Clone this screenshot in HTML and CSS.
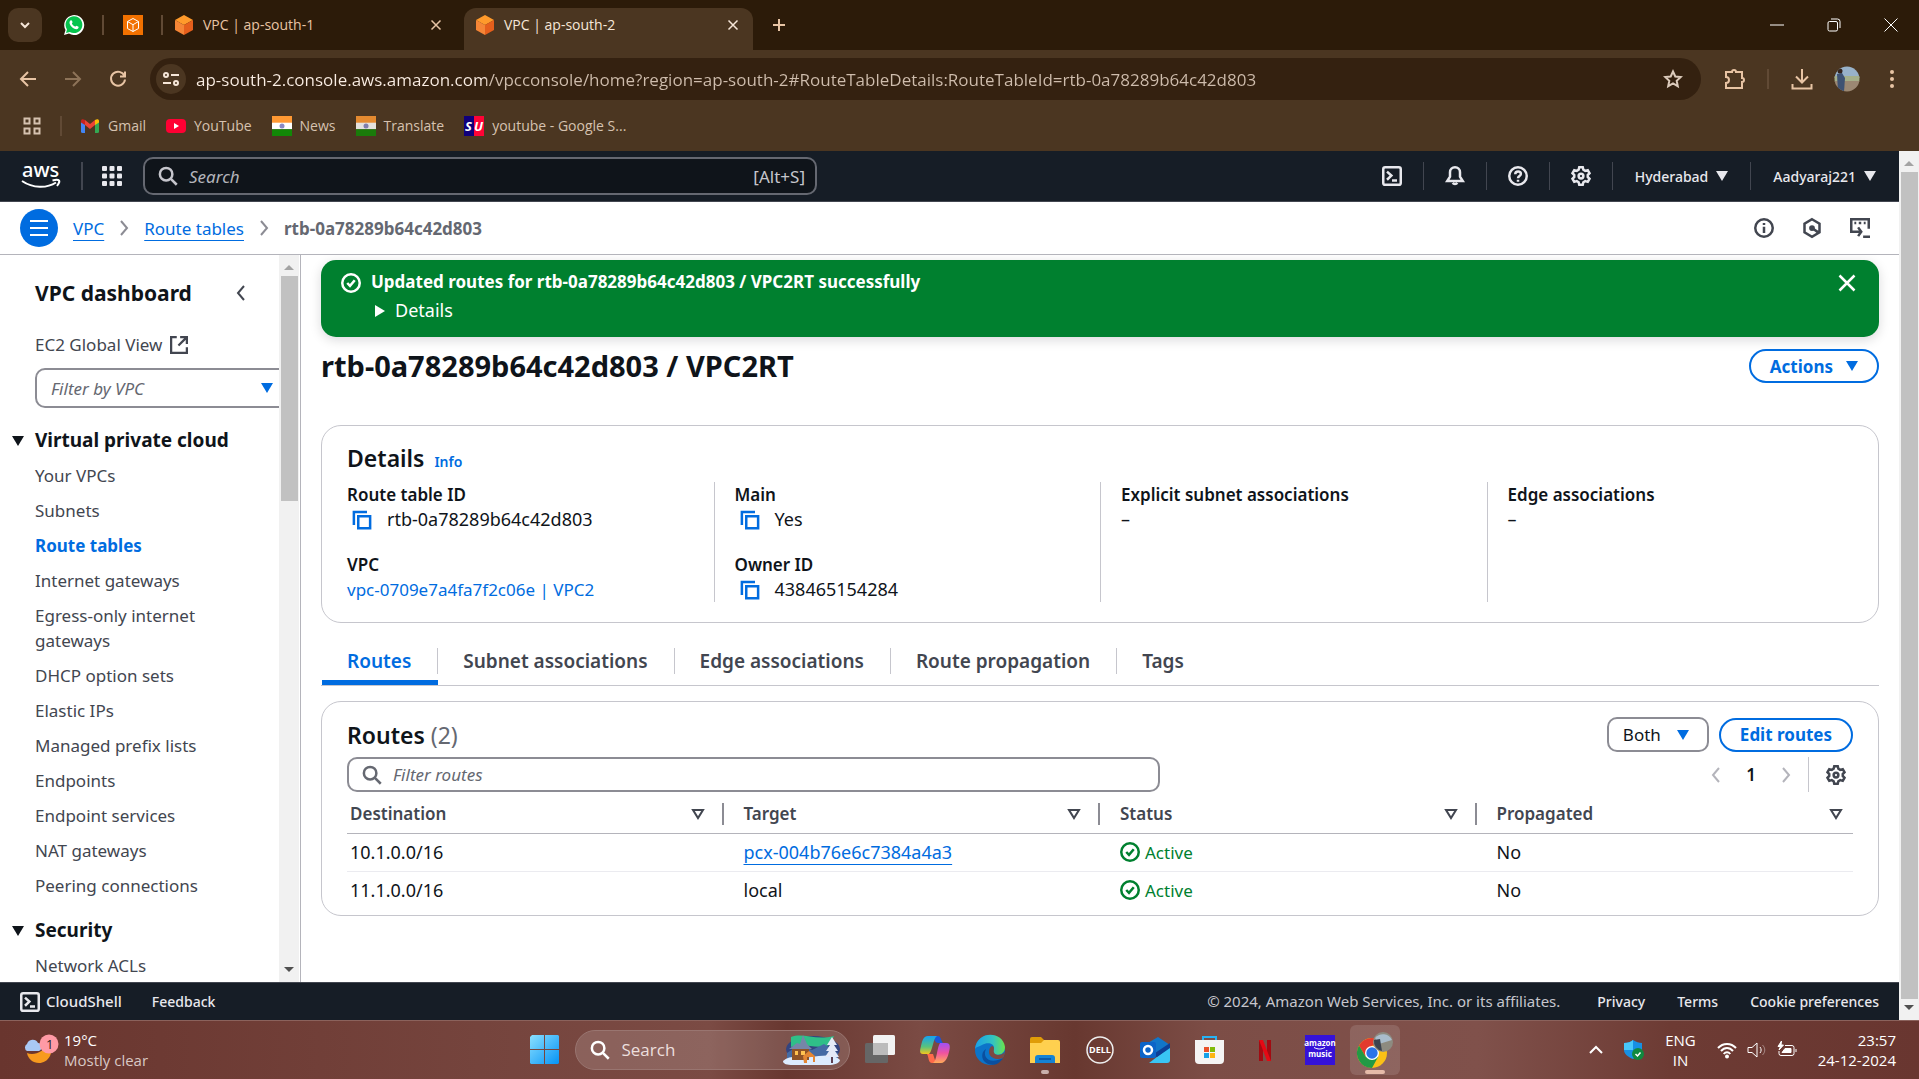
FILE: index.html
```html
<!DOCTYPE html>
<html lang="en">
<head>
<meta charset="utf-8">
<title>VPC | ap-south-2</title>
<meta name="viewport" content="width=device-width, initial-scale=1">
<link rel="stylesheet" href="styles.css">
</head>
<body>
<svg class="sprite" aria-hidden="true">
  <symbol id="i-search" viewBox="0 0 16 16"><circle cx="6.500" cy="6.500" r="5"/><path d="M10.300 10.300 15 15"/></symbol>
  <symbol id="i-gear" viewBox="0 0 16 16"><path d="M6.600 1h2.800l.5 2 1.500.9 2-.6 1.400 2.500-1.400 1.400v1.600l1.400 1.400-1.400 2.500-2-.6-1.500.9-.5 2H6.600l-.5-2-1.500-.9-2 .6-1.400-2.500 1.400-1.400V7.200L1.200 5.800l1.400-2.500 2 .6L6.100 3z"/><circle cx="8" cy="8" r="1.900"/></symbol>
  <symbol id="i-down" viewBox="0 0 12 10"><path d="M0 0h12L6 10z"/></symbol>
  <symbol id="i-sort" viewBox="0 0 14 12"><path d="M2 2h10L7 10z"/></symbol>
  <symbol id="i-right" viewBox="0 0 16 16"><path d="m5 1 6 7-6 7"/></symbol>
  <symbol id="i-left" viewBox="0 0 16 16"><path d="m11 1-6 7 6 7"/></symbol>
  <symbol id="i-close" viewBox="0 0 16 16"><path d="m2 2 12 12M14 2 2 14"/></symbol>
  <symbol id="i-ok" viewBox="0 0 16 16"><circle cx="8" cy="8" r="7"/><path d="m5 8 2.200 2.300L11 5.800"/></symbol>
  <symbol id="i-copy" viewBox="0 0 16 16"><path d="M1.500 12V1.500H12M5 5h9.500v9.500H5z"/></symbol>
  <symbol id="i-shell" viewBox="0 0 16 16"><rect x="1" y="1" width="14" height="14" rx="1.500"/><path d="m4 4.500 3.500 3.200L4 11M8 11.500h4"/></symbol>
  <symbol id="i-cube" viewBox="0 0 18 20"><path fill="#ff9a2b" d="M9 0l9 5-9 5-9-5z"/><path fill="#f58536" d="M0 5l9 5v10l-9-5z"/><path fill="#e65f1c" d="M18 5l-9 5v10l9-5z"/></symbol>
  <symbol id="i-flag" viewBox="0 0 20 20"><path fill="#ff9933" d="M0 0h20v7H0z"/><path fill="#fff" d="M0 6.700h20v6.600H0z"/><path fill="#128807" d="M0 13.300h20V20H0z"/><circle cx="10" cy="10" r="2.500" fill="#8a8ac4"/></symbol>
</svg>

<header class="browser">
  <div class="tabstrip">
    <button class="tab-search" aria-label="Search tabs"><svg class="line s12" viewBox="0 0 12 12"><path d="m2 4 4 4 4-4"/></svg></button>
    <button class="pinned" aria-label="WhatsApp"><svg class="s20" viewBox="0 0 20 20"><path fill="#fff" d="M0 20l1.500-5A10 10 0 1 1 5 18.600z"/><path fill="#06c44d" d="M2 18l1-3.600A8.400 8.400 0 1 1 5.800 17z"/><path fill="#fff" d="M6.500 5.500c1-.8 1.500 0 2 1.500.2.800-.8 1-.5 1.700.8 1.500 1.700 2.200 3 2.800.7.200 1-.9 1.500-.8l2 1c.6.700-.6 2.600-2 2.600C9 14.300 5.300 10 5.500 7.500c0-.8.500-1.600 1-2z"/></svg></button>
    <span class="tick"></span>
    <button class="pinned" aria-label="AWS console"><svg class="s20" viewBox="0 0 20 20"><path fill="#f27100" d="M0 0h20v20H0z"/><path fill="none" stroke="#fff" d="M10 3.500l5.500 3v7l-5.500 3-5.500-3v-7zM4.500 6.500 10 9.700l5.500-3.200M10 9.700v6.800"/></svg></button>
    <span class="tick"></span>
    <div class="tab"><svg class="cube"><use href="#i-cube"/></svg><span class="tab-title">VPC | ap-south-1</span><button aria-label="Close tab"><svg class="line s12"><use href="#i-close"/></svg></button></div>
    <div class="tab tab-active"><svg class="cube"><use href="#i-cube"/></svg><span class="tab-title">VPC | ap-south-2</span><button aria-label="Close tab"><svg class="line s12"><use href="#i-close"/></svg></button></div>
    <button class="new-tab" aria-label="New tab"><svg class="line s16" viewBox="0 0 16 16"><path d="M8 2v12M2 8h12"/></svg></button>
    <div class="window-controls">
      <button aria-label="Minimise"><svg class="line s14" viewBox="0 0 14 14"><path d="M0 7h14"/></svg></button>
      <button aria-label="Restore"><svg class="line s14" viewBox="0 0 14 14"><rect x="1" y="3.500" width="9.500" height="9.500" rx="1.500"/><path d="M4 1h6.500a2.500 2.500 0 0 1 2.500 2.500V10"/></svg></button>
      <button aria-label="Close"><svg class="line s14" viewBox="0 0 14 14"><path d="m.5.5 13 13m0-13-13 13"/></svg></button>
    </div>
  </div>
  <div class="toolbar">
    <button class="tool" aria-label="Back"><svg class="line s18" viewBox="0 0 18 18"><path d="M17 9H2m7-7L2 9l7 7"/></svg></button>
    <button class="tool dim" aria-label="Forward"><svg class="line s18" viewBox="0 0 18 18"><path d="M1 9h15M9 2l7 7-7 7"/></svg></button>
    <button class="tool" aria-label="Reload"><svg class="line s18" viewBox="0 0 18 18"><path d="M15.500 6A7 7 0 1 0 16 9.500M16 1.500V6.500h-5"/></svg></button>
    <div class="omnibox">
      <button class="site-info" aria-label="Site information"><svg class="line s18" viewBox="0 0 18 18"><circle cx="4" cy="5" r="2"/><path d="M9 5h8M1 13h8"/><circle cx="14" cy="13" r="2"/></svg></button>
      <input class="url" aria-label="Address" value="ap-south-2.console.aws.amazon.com/vpcconsole/home?region=ap-south-2#RouteTableDetails:RouteTableId=rtb-0a78289b64c42d803">
      <button class="star" aria-label="Bookmark this tab"><svg class="line s20" viewBox="0 0 20 20"><path d="m10 2.500 2.300 5 5.400.6-4 3.700 1.100 5.400L10 14.500l-4.800 2.700 1.100-5.400-4-3.700 5.400-.6z"/></svg></button>
    </div>
    <button class="tool" aria-label="Extensions"><svg class="line s22" viewBox="0 0 22 22"><path d="M2 4h6a2 2 0 0 1 4 0h6v6a2 2 0 0 1 0 4v6H2v-5a3 3 0 0 0 0-6z"/></svg></button>
    <span class="tick"></span>
    <button class="tool" aria-label="Downloads"><svg class="line s22" viewBox="0 0 22 22"><path d="M11 1v13M5 8.500l6 6 6-6M1.500 16v4.500h19V16"/></svg></button>
    <button class="tool" aria-label="Profile"><svg class="s26" viewBox="0 0 26 26"><clipPath id="av"><circle cx="13" cy="13" r="12.500"/></clipPath><g clip-path="url(#av)"><path fill="#98b2c9" d="M0 0h26v12H0z"/><path fill="#a5b08a" d="M0 10h26v6H0z"/><path fill="#9b8873" d="M0 15h26v11H0z"/><path fill="#3e5273" d="M3 8l5-1 3 5-1 14H4z"/><circle cx="6" cy="5" r="2.500" fill="#33241e"/></g></svg></button>
    <button class="tool" aria-label="Menu"><svg class="s20 fill" viewBox="0 0 20 20"><circle cx="10" cy="3" r="2"/><circle cx="10" cy="10" r="2"/><circle cx="10" cy="17" r="2"/></svg></button>
  </div>
  <nav class="bookmarks" aria-label="Bookmarks">
    <button aria-label="All apps"><svg class="line s18" viewBox="0 0 18 18"><path d="M1.500 1.500h5v5h-5zM11.500 1.500h5v5h-5zM1.500 11.500h5v5h-5zM11.500 11.500h5v5h-5z"/></svg></button>
    <span class="tick"></span>
    <a href="#"><svg class="s20" viewBox="0 0 20 20"><path fill="#4285f4" d="M1 5l4 3v9H2.500A1.500 1.500 0 0 1 1 15.500z"/><path fill="#34a853" d="M19 5l-4 3v9h2.500a1.500 1.500 0 0 0 1.500-1.500z"/><path fill="#ea4335" d="M5 4l5 4 5-4v5l-5 4-5-4z"/><path fill="#c5221f" d="M1 5c0-2 2-2.500 4-1v5L1 6.500z"/><path fill="#fbbc04" d="M19 5c0-2-2-2.500-4-1v5l4-2.500z"/></svg>Gmail</a>
    <a href="#"><svg class="s20" viewBox="0 0 20 20"><rect y="3" width="20" height="14" rx="4" fill="#ff0033"/><path fill="#fff" d="m8 7 5 3-5 3z"/></svg>YouTube</a>
    <a href="#"><svg class="s20"><use href="#i-flag"/></svg>News</a>
    <a href="#"><svg class="s20 pale"><use href="#i-flag"/></svg>Translate</a>
    <a href="#"><svg class="s20" viewBox="0 0 20 20"><path fill="#10007c" d="M0 0h10v20H0z"/><path fill="#ff0336" d="M10 0h10v20H10z"/><text class="su" x="1" y="15">S</text><text class="su" x="10" y="15">U</text></svg>youtube - Google S...</a>
  </nav>
</header>

<div class="viewport">
  <div class="console">
    <header class="aws-nav">
      <a class="aws-logo" href="#" aria-label="AWS home"><svg viewBox="0 0 40 27"><text x="1" y="14">aws</text><path class="smile" d="M1 18c11 7.500 25 7.500 34 1.500M31.500 17.500c4-1 6-.5 6.500 0s0 3-2 5.500"/></svg></a>
      <span class="bar bar-tall"></span>
      <button class="apps" aria-label="Services"><svg class="s20 fill" viewBox="0 0 20 20"><rect width="5" height="5" rx="1"/><rect x="7.500" width="5" height="5" rx="1"/><rect x="15" width="5" height="5" rx="1"/><rect y="7.500" width="5" height="5" rx="1"/><rect x="7.500" y="7.500" width="5" height="5" rx="1"/><rect x="15" y="7.500" width="5" height="5" rx="1"/><rect y="15" width="5" height="5" rx="1"/><rect x="7.500" y="15" width="5" height="5" rx="1"/><rect x="15" y="15" width="5" height="5" rx="1"/></svg></button>
      <label class="aws-search"><svg class="line s20"><use href="#i-search"/></svg><input type="search" placeholder="Search" aria-label="Search"><span>[Alt+S]</span></label>
      <div class="aws-tools">
        <button aria-label="CloudShell"><svg class="line s20"><use href="#i-shell"/></svg></button><span class="bar"></span>
        <button aria-label="Notifications"><svg class="line s20" viewBox="0 0 16 16"><path d="M8 1a4 4 0 0 0-4 4v3.500L1.800 12h12.400L12 8.500V5a4 4 0 0 0-4-4zM6.200 13.500a2 1.700 0 0 0 3.600 0"/></svg></button><span class="bar"></span>
        <button aria-label="Help"><svg class="line s20" viewBox="0 0 16 16"><circle cx="8" cy="8" r="7"/><path d="M5.800 6.500C5.800 3.500 10.300 3.700 10.300 6.300 10.300 8 8 8 8 9.800M8 11v1.500"/></svg></button><span class="bar"></span>
        <button aria-label="Settings"><svg class="line s20"><use href="#i-gear"/></svg></button><span class="bar"></span>
        <button class="aws-menu">Hyderabad<svg class="arrow"><use href="#i-down"/></svg></button><span class="bar"></span>
        <button class="aws-menu">Aadyaraj221<svg class="arrow"><use href="#i-down"/></svg></button>
      </div>
    </header>

    <div class="crumb-bar">
      <button class="burger" aria-label="Open navigation"><svg class="line s18" viewBox="0 0 18 18"><path d="M0 2h18M0 9h18M0 16h18"/></svg></button>
      <nav class="crumbs" aria-label="Breadcrumbs">
        <a href="#">VPC</a><svg class="line s16"><use href="#i-right"/></svg><a href="#">Route tables</a><svg class="line s16"><use href="#i-right"/></svg><span>rtb-0a78289b64c42d803</span>
      </nav>
      <div class="crumb-tools">
        <button aria-label="Info"><svg class="line s20" viewBox="0 0 16 16"><circle cx="8" cy="8" r="7"/><path d="M8 7v5M8 4v1.500"/></svg></button>
        <button aria-label="Diagnostics"><svg class="line s20" viewBox="0 0 16 16"><path d="m8 1 6 3.500v7L8 15l-6-3.500v-7zM8 8l5 3.500"/><circle class="fill" cx="8" cy="8" r="1.300"/></svg></button>
        <button aria-label="Console to code"><svg class="line s20" viewBox="0 0 16 16"><path d="M4 11H1V1h14v7.500M3.500 4H5m2 0h2m2 0h1.500M4 11h5M6.500 7.500 9 11l-2.500 3.500M10.500 15H16"/></svg></button>
      </div>
    </div>

    <div class="work">
      <aside class="side">
        <div class="side-body">
          <div class="side-head"><h2>VPC dashboard</h2><button aria-label="Close navigation"><svg class="line s16"><use href="#i-left"/></svg></button></div>
          <a class="side-ext" href="#">EC2 Global View <svg class="line s18" viewBox="0 0 16 16"><path d="M6 1H1v14h14v-5M9 1h6v6M15 1 7.500 8.500"/></svg></a>
          <div class="vpc-filter"><select aria-label="Filter by VPC"><option>Filter by VPC</option></select><svg class="arrow"><use href="#i-down"/></svg></div>
          <h3><svg class="arrow"><use href="#i-down"/></svg>Virtual private cloud</h3>
          <ul>
            <li><a href="#">Your VPCs</a></li>
            <li><a href="#">Subnets</a></li>
            <li><a class="current" href="#">Route tables</a></li>
            <li><a href="#">Internet gateways</a></li>
            <li><a href="#">Egress-only internet gateways</a></li>
            <li><a href="#">DHCP option sets</a></li>
            <li><a href="#">Elastic IPs</a></li>
            <li><a href="#">Managed prefix lists</a></li>
            <li><a href="#">Endpoints</a></li>
            <li><a href="#">Endpoint services</a></li>
            <li><a href="#">NAT gateways</a></li>
            <li><a href="#">Peering connections</a></li>
          </ul>
          <h3><svg class="arrow"><use href="#i-down"/></svg>Security</h3>
          <ul>
            <li><a href="#">Network ACLs</a></li>
          </ul>
        </div>
        <div class="scroll"><span class="scroll-up"></span><span class="thumb side-thumb"></span><span class="scroll-down"></span></div>
      </aside>

      <main class="content">
        <section class="flash">
          <svg class="line s20"><use href="#i-ok"/></svg>
          <div class="flash-text"><strong>Updated routes for rtb-0a78289b64c42d803 / VPC2RT successfully</strong><button><svg class="play" viewBox="0 0 10 12"><path d="M0 0v12l10-6z"/></svg>Details</button></div>
          <button aria-label="Dismiss"><svg class="line s20"><use href="#i-close"/></svg></button>
        </section>

        <div class="title-row"><h1>rtb-0a78289b64c42d803 / VPC2RT</h1><button class="pill">Actions<svg class="arrow"><use href="#i-down"/></svg></button></div>

        <section class="card details">
          <h2>Details <a href="#">Info</a></h2>
          <div class="cols">
            <dl>
              <div><dt>Route table ID</dt><dd><button aria-label="Copy"><svg class="line s20"><use href="#i-copy"/></svg></button>rtb-0a78289b64c42d803</dd></div>
              <div><dt>VPC</dt><dd><a href="#">vpc-0709e7a4fa7f2c06e | VPC2</a></dd></div>
            </dl>
            <dl>
              <div><dt>Main</dt><dd><button aria-label="Copy"><svg class="line s20"><use href="#i-copy"/></svg></button>Yes</dd></div>
              <div><dt>Owner ID</dt><dd><button aria-label="Copy"><svg class="line s20"><use href="#i-copy"/></svg></button>438465154284</dd></div>
            </dl>
            <dl><div><dt>Explicit subnet associations</dt><dd>–</dd></div></dl>
            <dl><div><dt>Edge associations</dt><dd>–</dd></div></dl>
          </div>
        </section>

        <div class="tabs" role="tablist">
          <button class="on" role="tab" aria-selected="true"><span>Routes</span></button>
          <button role="tab"><span>Subnet associations</span></button>
          <button role="tab"><span>Edge associations</span></button>
          <button role="tab"><span>Route propagation</span></button>
          <button role="tab"><span>Tags</span></button>
        </div>

        <section class="card routes">
          <div class="routes-head">
            <h2>Routes <span>(2)</span></h2>
            <div class="both"><select aria-label="Route type"><option>Both</option></select><svg class="arrow"><use href="#i-down"/></svg></div>
            <button class="pill">Edit routes</button>
          </div>
          <div class="routes-tools">
            <label class="filter"><svg class="line s20"><use href="#i-search"/></svg><input type="search" placeholder="Filter routes" aria-label="Filter routes"></label>
            <div class="pager">
              <button class="off" aria-label="Previous page"><svg class="line s16"><use href="#i-left"/></svg></button>
              <button class="page">1</button>
              <button class="off" aria-label="Next page"><svg class="line s16"><use href="#i-right"/></svg></button>
              <button class="prefs" aria-label="Preferences"><svg class="line s20"><use href="#i-gear"/></svg></button>
            </div>
          </div>
          <table>
            <thead><tr>
              <th scope="col"><div>Destination<svg class="line sort"><use href="#i-sort"/></svg></div></th>
              <th scope="col"><div>Target<svg class="line sort"><use href="#i-sort"/></svg></div></th>
              <th scope="col"><div>Status<svg class="line sort"><use href="#i-sort"/></svg></div></th>
              <th scope="col"><div>Propagated<svg class="line sort"><use href="#i-sort"/></svg></div></th>
            </tr></thead>
            <tbody>
              <tr><td>10.1.0.0/16</td><td><a href="#">pcx-004b76e6c7384a4a3</a></td><td><span class="active"><svg class="line s20"><use href="#i-ok"/></svg>Active</span></td><td>No</td></tr>
              <tr><td>11.1.0.0/16</td><td>local</td><td><span class="active"><svg class="line s20"><use href="#i-ok"/></svg>Active</span></td><td>No</td></tr>
            </tbody>
          </table>
        </section>
      </main>
    </div>

    <footer class="aws-foot">
      <button class="shell"><svg class="line s20"><use href="#i-shell"/></svg>CloudShell</button>
      <a href="#">Feedback</a>
      <span class="legal">© 2024, Amazon Web Services, Inc. or its affiliates.</span>
      <a href="#">Privacy</a>
      <a href="#">Terms</a>
      <a href="#">Cookie preferences</a>
    </footer>
  </div>
  <div class="scroll"><span class="scroll-up"></span><span class="thumb page-thumb"></span><span class="scroll-down"></span></div>
</div>

<footer class="taskbar">
  <button class="weather">
    <svg class="moon" viewBox="0 0 36 32"><path fill="#f79a1e" d="M4 19c7 3 17-1 22-10 6 10-1 20-10 20C10 29 5 25 4 19z"/><path fill="#a9c8f5" d="M4 17a4 4 0 0 1 0-7 6 6 0 0 1 11-1c4 0 5 7 1 8z"/><circle cx="26" cy="10" r="9.500" fill="#ff9aa5"/><text x="23" y="15">1</text></svg>
    <span>19°C<br><span class="soft">Mostly clear</span></span>
  </button>
  <div class="dock">
    <button aria-label="Start"><svg class="s30" viewBox="0 0 30 30"><defs><linearGradient id="win" x1="0" y1="0" x2="1" y2="1"><stop offset="0" stop-color="#8be0ff"/><stop offset="1" stop-color="#0593f5"/></linearGradient></defs><path fill="url(#win)" d="M2 0h12v14H0V2zM15 0h13l1 1v13H15zM0 15h14v14H1l-1-1zM15 15h14v13l-1 1H15z"/></svg></button>
    <label class="win-search"><svg class="line s20"><use href="#i-search"/></svg><input type="search" placeholder="Search" aria-label="Search Windows">
      <svg class="scene" viewBox="0 0 58 32"><ellipse cx="30" cy="15" rx="27" ry="13" fill="#33447f"/><path fill="#2fbf88" d="M8 3c12-5 24 4 43-1l-4 9C32 16 22 8 8 13z"/><path fill="#456ba4" d="M4 19l12-8 13 5 12-6 14 9v6H4z"/><path fill="#dcecff" d="M0 27c8-7 18-3 28-4s22-4 29 3c0 3-6 5-12 5H10c-6 0-10-1-10-4z"/><path fill="#8f5327" d="M9 14h17v12H9z"/><path fill="#7686a8" d="M6 15l8-6 3 1 3-9 4 9 5 5z"/><path fill="#ffc250" d="M12 17h3v4h-3zM18 17h4v4h-4z"/><path fill="#e38634" d="M20 22l6-5 6 5v6h-2v-5h-6v6h-3z"/><path fill="#e4e9f7" d="M49 3l-5 8h3l-4 6h3l-4 6h14l-4-6h3l-4-6h3z"/><path fill="#5d4052" d="M48 23h2v6h-2z"/></svg></label>
    <button aria-label="Task view"><svg class="s30" viewBox="0 0 30 30"><rect y="8" width="23" height="20" rx="1.500" fill="#666"/><rect x="8" width="22" height="20" rx="1.500" fill="#f2f2f2"/><path fill="#bbb" d="M8 8h15v12H8z"/></svg></button>
    <button aria-label="Copilot"><svg class="s30" viewBox="0 0 30 30"><defs><linearGradient id="cpa" x1="0" y1="0" x2="0" y2="1"><stop offset="0" stop-color="#14a3f2"/><stop offset=".6" stop-color="#59c37c"/><stop offset="1" stop-color="#f4c81d"/></linearGradient><linearGradient id="cpb" x1="0" y1="0" x2="0" y2="1"><stop offset="0" stop-color="#a050f5"/><stop offset=".5" stop-color="#f052a0"/><stop offset="1" stop-color="#ffab58"/></linearGradient></defs><path fill="#1a56d8" d="M14 1h4c3 0 3 5 5 7h-5c-3 0-4-4-4-7z"/><path fill="#ff6a4a" d="M7 19h6l3 9h-4c-4 0-3-6-5-9z"/><path fill="url(#cpa)" d="M8 1h9c-4 2-4 14-8 18H3c-4 0-3-4-2-8S3 1 8 1z"/><path fill="url(#cpb)" d="M20 8h6c5 0 4 5 3 9s-3 11-8 11h-8c4-2 4-16 7-20z"/></svg></button>
    <button aria-label="Edge"><svg class="s30" viewBox="0 0 30 30"><defs><linearGradient id="edg"><stop offset="0" stop-color="#1aa0e8"/><stop offset=".6" stop-color="#33c4c0"/><stop offset="1" stop-color="#6be34c"/></linearGradient></defs><circle cx="15" cy="15" r="15" fill="#0c74c9"/><path fill="url(#edg)" d="M0 14C2-5 28-4 30 12c0 7-6 9-11 7-3-1 0-3 0-6 0-5-7-6-12-3-4 2-6 2-7 4z"/><path fill="#0b4f9f" d="M11 14c-4 8 3 16 17 9-5 9-15 8-19 3-3-4-2-10 2-12z"/><path fill="#7c4942" d="M17 11c4 1 0 5 3 8 3 2 7 1 10-2l-2 6c-7 3-14-1-14-6 0-3 1-5 3-6z"/></svg></button>
    <button class="running" aria-label="File Explorer"><svg class="s30" viewBox="0 0 30 30"><path fill="#e09c08" d="M0 4a2 2 0 0 1 2-2h9l3 3v6H0z"/><path fill="#ffd04f" d="M0 8h11l3-3h14a2 2 0 0 1 2 2v21H0z"/><path fill="#1583d4" d="M5 28v-5a3 3 0 0 1 3-3h14a3 3 0 0 1 3 3v5z"/><path fill="#0a5aa8" d="M9 23h12v2H9z"/></svg></button>
    <button aria-label="Dell"><svg class="s30" viewBox="0 0 30 30"><circle cx="15" cy="15" r="13" fill="none" stroke="#eee" stroke-width="1.500"/><text class="dell" x="15" y="18">DELL</text></svg></button>
    <button aria-label="Outlook"><svg class="s30" viewBox="0 0 30 30"><path fill="#1176c9" d="M6 9 18 2l12 8v8H6z"/><path fill="#39c5f4" d="M30 12v13a3 3 0 0 1-3 3H9z"/><path fill="#0d3f96" d="M12 20 30 8v5L17 22z"/><rect y="7" width="16" height="16" rx="2" fill="#0c64c8"/><circle cx="8" cy="15" r="4" fill="none" stroke="#fff" stroke-width="2.500"/></svg></button>
    <button aria-label="Microsoft Store"><svg class="s30" viewBox="0 0 30 30"><path fill="none" stroke="#27b2f5" stroke-width="2" d="M8 6V2h13v4"/><path fill="#f4f4f4" d="M0 5h29v20a4 4 0 0 1-4 4H4a4 4 0 0 1-4-4z"/><path fill="#e8502a" d="M9 12h5v5H9z"/><path fill="#80bb0a" d="M15 12h5v5h-5z"/><path fill="#15a0e8" d="M9 18h5v5H9z"/><path fill="#fcb613" d="M15 18h5v5h-5z"/></svg></button>
    <button aria-label="Netflix"><svg class="s30" viewBox="0 0 30 30"><path fill="#a20b12" d="M9 5h4v21H9zM17 5h4v21h-4z"/><path fill="#e50914" d="M9 5h4l8 21h-4z"/></svg></button>
    <button aria-label="Amazon Music"><svg class="s30" viewBox="0 0 30 30"><path fill="#3512d8" d="M0 0h30v30H0z"/><text class="music" x="15" y="11">amazon</text><path fill="none" stroke="#fff" d="M9 12.500c4 2 7 2 11 0"/><text class="music" x="15" y="22">music</text></svg></button>
    <button class="running focused" aria-label="Chrome"><svg class="s36" viewBox="0 0 36 36"><circle cx="15" cy="21" r="15" fill="#fbc116"/><path fill="#e33b2e" d="M2 13.500a15 15 0 0 1 26 0H15l-6.500 11z"/><path fill="#229a45" d="M2 13.500 8.500 24.500 21 25l-6 11A15 15 0 0 1 2 13.500z"/><circle cx="15" cy="21" r="7" fill="#fff"/><circle cx="15" cy="21" r="5.700" fill="#2b73e8"/><circle cx="26" cy="10" r="10" fill="#8d8b80"/><path fill="#a9bccb" d="M18 6a10 10 0 0 1 17 2l-13 4z"/><path fill="#3a4350" d="M17 8l6-1 2 12a10 10 0 0 1-8-11z"/></svg></button>
  </div>
  <div class="tray">
    <button aria-label="Hidden icons"><svg class="line s14" viewBox="0 0 14 14"><path d="m1 10 6-6 6 6"/></svg></button>
    <button aria-label="Security"><svg class="s20" viewBox="0 0 20 20"><path fill="#1790e4" d="M0 3c4 0 7-1 9-3 3 2 6 3 9 3v7c0 4-4 7-9 9-5-2-9-5-9-9z"/><path fill="#48c8fa" d="M0 3c4 0 7-1 9-3v10H0z"/><circle cx="14" cy="14" r="6" fill="#10893e"/><path fill="none" stroke="#fff" stroke-width="1.500" d="m11.500 14 2 2 3-3.500"/></svg></button>
    <button class="lang">ENG<br>IN</button>
    <button class="status" aria-label="Network, sound and battery">
      <svg class="line s20" viewBox="0 0 20 20"><path d="M1 8c5-5.500 13-5.500 18 0M4 11c3.500-4 8.500-4 12 0M6.700 14c2-2.500 4.600-2.500 6.600 0"/><circle class="fill" cx="10" cy="16.500" r="1"/></svg>
      <svg class="line s20 thin" viewBox="0 0 20 20"><path d="M1 7.500h4l5-4.500v14l-5-4.500H1zM13 7c1.500 2 1.500 4 0 6"/><path opacity=".4" d="M15.500 5c3 3 3 7 0 10"/></svg>
      <svg class="line s20 thin" viewBox="0 0 20 20"><path d="M8 5.500h7a2 2 0 0 1 2 2v6a2 2 0 0 1-2 2H4a2 2 0 0 1-2-2V11M19 9v3"/><path class="fill" d="M8 8.500h6v4H5zM4.500 1 1 6.500h2.500L2 10l4.500-5H4z"/></svg>
    </button>
    <button class="clock">23:57<br>24-12-2024</button>
  </div>
</footer>
</body>
</html>
```
FILE: styles.css
```css
* { box-sizing: border-box; }

:root {
  --ui: "Noto Sans", "Open Sans", sans-serif;
  --system: "Open Sans", "Noto Sans", sans-serif;
  --blue: #006ce0;
  --ink: #0f141a;
  --grey: #424650;
  --line: #c6c6cd;
  --navy: #161d26;
}

body {
  margin: 0;
  height: 100vh;
  display: flex;
  flex-direction: column;
  overflow: hidden;
  font: 17px/25px var(--ui);
  color: var(--ink);
  background: #fff;
}

h1, h2, h3, ul, dl, dd, dt { margin: 0; padding: 0; }
ul { list-style: none; }
a { color: var(--blue); text-decoration: none; }
button, input, select {
  margin: 0;
  padding: 0;
  border: 0;
  background: none;
  font: inherit;
  color: inherit;
  outline: none;
}
button { display: flex; align-items: center; justify-content: center; }
select { appearance: none; }
input { min-width: 0; flex: 1; }
svg { flex: none; overflow: visible; }

.sprite { position: absolute; width: 0; height: 0; }
.line { fill: none; stroke: currentColor; stroke-width: 2; }
.thin { stroke-width: 1; }
.fill { fill: currentColor; }
.arrow { width: 12px; height: 10px; fill: currentColor; }
.s12 { width: 12px; height: 12px; }
.s14 { width: 14px; height: 14px; }
.s16 { width: 16px; height: 16px; }
.s18 { width: 18px; height: 18px; }
.s20 { width: 20px; height: 20px; }
.s22 { width: 22px; height: 22px; }
.s26 { width: 26px; height: 26px; }
.s30 { width: 30px; height: 30px; }
.s36 { width: 36px; height: 36px; }

/* Browser frame */
.browser { flex: none; background: #4b3621; color: #e8c4a4; font: 14px/20px var(--system); }
.tabstrip { display: flex; align-items: center; height: 50px; padding-left: 8px; background: #2c1b09; }
.tab-search { width: 34px; height: 34px; border-radius: 10px; background: #4b3621; color: #f6e6d8; }
.pinned { width: 20px; margin: 0 20px 0 22px; }
.tab-search + .pinned { margin-right: 18px; }
.tick + .pinned { margin: 0 18px 0 19px; }
.tick { width: 2px; height: 20px; background: #614a35; }
.tab { display: flex; align-items: center; align-self: flex-end; width: 289px; height: 42px; padding: 0 14px 8px 12px; }
.tab-active { background: #4b3621; border-radius: 12px 12px 0 0; color: #f6e6d8; }
.tick + .tab { width: 301px; padding-right: 22px; }
.cube { width: 18px; height: 20px; }
.tab-title { flex: 1; margin-left: 10px; }
.new-tab { width: 52px; }
.window-controls { display: flex; margin-left: auto; color: #fff; }
.window-controls button { width: 57px; height: 50px; }
.window-controls .line { stroke-width: 1; }

.toolbar { display: flex; align-items: center; height: 58px; padding: 0 5px; }
.tool { width: 45px; height: 42px; }
.toolbar .dim { color: #8d7358; }
.toolbar .tick { margin: 0 10px; }
.omnibox { flex: 1; display: flex; align-items: center; height: 42px; margin: 0 11px 0 10px; padding: 0 18px 0 6px; border-radius: 21px; background: #342110; }
.site-info { width: 30px; height: 30px; border-radius: 15px; background: #4b3621; color: #f6e6d8; }
.url {
  height: 32px;
  margin-left: 10px;
  font-size: 17px;
  color: #dccbbc;
  background: linear-gradient(90deg, #fbeee4 290px, #cfbdad 290px);
  background-clip: text;
  -webkit-text-fill-color: transparent;
}
.star { color: #dccbbc; }

.bookmarks { display: flex; align-items: center; height: 43px; padding: 0 23px 8px; color: #d6c2b0; }
.bookmarks a { display: flex; align-items: center; gap: 8px; margin-right: 20px; color: inherit; }
.bookmarks .tick { margin: 0 18px 0 19px; }
.pale { opacity: .85; }
.su { font: italic bold 13px var(--system); fill: #fff; }

/* Page and scroll bars */
.viewport { flex: 1; min-height: 0; display: flex; }
.console { flex: 1; min-width: 0; display: flex; flex-direction: column; }
.scroll { flex: none; width: 20px; display: flex; flex-direction: column; align-items: center; padding: 8px 0; background: #f1f1f1; }
.scroll-up, .scroll-down { border: 5px solid transparent; border-top-width: 0; border-bottom-color: #a3a3a3; margin: 2px 0 6px; }
.scroll-down { border-width: 5px 5px 0; border-top-color: #505050; margin: auto 0 2px; }
.thumb { width: 17px; background: #c1c1c1; }
.page-thumb { height: 97%; }
.side-thumb { height: 225px; }

/* AWS navigation */
.aws-nav { flex: none; display: flex; align-items: center; height: 51px; padding: 0 23px 0 21px; background: var(--navy); border-bottom: 1px solid #424650; color: #e8e8ed; font-size: 14px; }
.aws-logo { width: 40px; height: 27px; color: #fff; }
.aws-logo text { font: 500 20px var(--ui); fill: #fff; }
.smile { fill: none; stroke: #fff; stroke-width: 2; }
.bar { width: 1px; height: 28px; background: #424650; }
.bar-tall { width: 2px; margin: 0 19px 0 20px; }
.aws-search { display: flex; align-items: center; gap: 11px; width: 674px; height: 38px; margin-left: 21px; padding: 0 10px 0 13px; border: 2px solid #656871; border-radius: 10px; background: #0f141a; font-size: 17px; color: #c6c6cd; }
.aws-search input::placeholder { font-style: italic; color: #b4b4bb; opacity: 1; }
.aws-tools { display: flex; align-items: center; margin-left: auto; }
.aws-tools button { width: 62px; }
.aws-tools .aws-menu { width: auto; gap: 8px; margin: 0 22px; font-weight: 500; }
.aws-tools .aws-menu:last-child { margin-right: 0; }

.crumb-bar { flex: none; display: flex; align-items: center; height: 53px; padding: 0 29px 0 20px; border-bottom: 1px solid #b4b4bb; }
.burger { width: 38px; height: 38px; border-radius: 19px; background: var(--blue); color: #fff; }
.crumbs { display: flex; align-items: center; gap: 12px; margin-left: 15px; }
.crumbs a, td a { text-decoration: underline; text-decoration-thickness: 1px; text-underline-offset: 5px; }
.crumbs svg { color: #8c8c94; }
.crumbs span { font-weight: 700; color: #656871; }
.crumb-tools { display: flex; gap: 28px; margin-left: auto; color: var(--grey); }

.work { flex: 1; min-height: 0; display: flex; }

/* Side navigation */
.side { flex: none; width: 301px; display: flex; border-right: 1px solid #b4b4bb; color: var(--grey); overflow: hidden; }
.side-body { width: 279px; padding: 24px 0 0 35px; overflow: hidden; }
.side-head { display: flex; align-items: center; justify-content: space-between; padding-right: 30px; color: var(--grey); }
.side-head h2 { font-size: 21px; line-height: 28px; color: var(--ink); }
.side-ext { display: flex; align-items: center; gap: 8px; margin-top: 25px; color: inherit; }
.vpc-filter { display: flex; align-items: center; width: 270px; height: 40px; margin-top: 11px; padding: 0 30px 0 14px; border: 2px solid #8c8c94; border-radius: 10px; }
.vpc-filter select { width: 212px; font-style: italic; color: #656871; }
.vpc-filter .arrow { color: var(--blue); }
.side h3 { display: flex; align-items: center; gap: 11px; margin: 20px 0 10px -23px; font-size: 19px; line-height: 25px; color: var(--ink); }
.side li { margin-bottom: 10px; padding-right: 40px; }
.side ul + h3 { margin-top: 20px; }
.side li a { color: inherit; }
.side li .current { color: var(--blue); font-weight: 700; }

/* Main column */
.content { flex: 1; min-width: 0; padding: 5px 20px 0; overflow: hidden; }
.flash { display: flex; align-items: flex-start; gap: 10px; height: 77px; padding: 13px 22px 10px 20px; border-radius: 15px; background: #00802f; color: #fff; box-shadow: 0 3px 12px rgba(0, 7, 22, .15); }
.flash-text { flex: 1; display: flex; flex-direction: column; align-items: flex-start; gap: 4px; margin-top: -4px; }
.flash-text strong { font-weight: 700; }
.flash-text button { gap: 10px; margin-left: 4px; font-size: 18px; }
.play { width: 10px; height: 12px; fill: #fff; }
.title-row { display: flex; align-items: center; justify-content: space-between; margin: 12px 0 42px; height: 34px; }
.title-row h1 { font-size: 29px; line-height: 34px; font-weight: 700; }
.pill { height: 34px; padding: 0 19px; gap: 13px; border: 2px solid var(--blue); border-radius: 17px; color: var(--blue); font-weight: 700; }

.card { border: 1px solid var(--line); border-radius: 20px; padding: 18px 25px 20px; }
.card h2 { height: 28px; font-size: 23px; line-height: 28px; font-weight: 600; }
.card h2 a { margin-left: 4px; font-size: 14px; }
.cols { display: grid; grid-template-columns: repeat(4, 1fr); gap: 40px; margin-top: 10px; }
.cols dl { display: flex; flex-direction: column; gap: 20px; min-height: 120px; }
.cols dl + dl { margin-left: -20px; padding-left: 20px; border-left: 1px solid var(--line); }
.cols dt { font-weight: 600; }
.cols dd { display: flex; align-items: center; font-size: 18px; }
.cols dd a { font-size: 17px; }
.cols dd button { margin: 0 15px 0 5px; color: var(--blue); }

.tabs { display: flex; margin-top: 25px; padding-left: 1px; border-bottom: 1px solid var(--line); }
.tabs button { padding-bottom: 6px; border-bottom: 5px solid transparent; color: var(--grey); font-size: 19px; line-height: 26px; font-weight: 600; }
.tabs span { padding: 0 26px 0 25px; border-right: 1px solid var(--line); }
.tabs button:last-child span { border-right: 0; }
.tabs .on { color: var(--blue); border-bottom-color: var(--blue); }

.routes { margin-top: 15px; padding: 15px 25px 6px; }
.routes-head { display: flex; align-items: center; gap: 10px; }
.routes-head h2 { flex: 1; }
.routes-head h2 span { font-weight: 400; color: #656871; }
.both { display: flex; align-items: center; height: 35px; padding: 0 18px 0 14px; border: 2px solid #8c8c94; border-radius: 10px; }
.both select { width: 54px; }
.both .arrow { color: var(--blue); }
.routes-tools { display: flex; justify-content: space-between; margin-top: 5px; }
.filter { width: 54%; height: 35px; display: flex; align-items: center; gap: 11px; padding: 0 13px; border: 2px solid #8c8c94; border-radius: 10px; color: #656871; }
.filter input::placeholder { font-style: italic; color: #656871; opacity: 1; }
.pager { display: flex; align-items: center; }
.pager .off { width: 28px; color: #b4b4bb; }
.pager .page { width: 42px; font-weight: 600; }
.pager .prefs { height: 35px; margin-left: 8px; padding: 0 7px 0 17px; border-left: 1px solid var(--line); color: var(--grey); }

table { width: 100%; border-collapse: collapse; table-layout: fixed; }
th { height: 41px; padding: 3px 0 0; color: var(--grey); font-weight: 600; border-bottom: 1px solid #b4b4bb; }
th div { display: flex; align-items: center; justify-content: space-between; height: 22px; padding: 0 17px 0 20px; border-right: 2px solid #8c8c94; }
th:last-child div { padding-right: 10px; border-right: 0; }
th:first-child div { padding-left: 3px; }
.sort { width: 14px; height: 12px; }
td { height: 38px; padding: 0 0 0 20px; border-bottom: 1px solid #ebebf0; font-size: 18px; }
td:first-child { padding-left: 3px; }
tr:last-child td { border-bottom: 0; }
.active { display: flex; align-items: center; gap: 5px; font-size: 17px; color: #00802f; }

.aws-foot { flex: none; display: flex; align-items: center; height: 38px; padding: 0 20px; border-top: 1px solid #424650; background: var(--navy); color: #c6c6cd; font-size: 15px; }
.aws-foot a, .shell { color: #e8e8ed; font-weight: 500; }
.aws-foot a { font-size: 14px; }
.shell { gap: 6px; margin-right: 30px; }
.legal { margin-left: auto; }
.legal ~ a { margin-left: 32px; }
.legal + a { margin-left: 37px; }

/* Windows taskbar */
.taskbar { flex: none; display: grid; grid-template-columns: 1fr auto 1fr; align-items: center; height: 59px; padding: 0 23px; border-top: 1px solid #8b625c; background: linear-gradient(90deg, #69352e, #75443d 25%, #7b4b44 37%, #683730 41%, #7b4b44 48%, #683830 56%, #7c4d46 63%, #80514b 77%, #6d3b34 87%, #693630); color: #fff; font: 15px/20px var(--system); }
.weather { justify-self: start; gap: 5px; text-align: left; }
.moon { width: 36px; height: 32px; }
.moon text { font: 13px var(--system); fill: #222; }
.soft { color: #d9c8c5; }
.dock { display: flex; align-items: center; gap: 5px; }
.dock button { width: 50px; height: 50px; border-radius: 6px; }
.dock .focused { background: rgba(255, 255, 255, .12); }
.running { position: relative; }
.running::after { content: ""; position: absolute; bottom: 1px; left: 21px; width: 8px; height: 4px; border-radius: 2px; background: #c9b0ac; }
.focused::after { left: 15px; width: 20px; background: #e6bba9; }
.win-search { display: flex; align-items: center; gap: 12px; width: 275px; height: 40px; padding: 0 8px 0 14px; border: 1px solid #997570; border-radius: 20px; background: rgba(255, 255, 255, .14); font-size: 17px; }
.win-search input::placeholder { color: #ecdfdd; opacity: 1; }
.scene { width: 58px; height: 32px; }
.dell { font: bold 9px var(--system); fill: #fff; text-anchor: middle; }
.music { font: bold 8px var(--system); fill: #fff; text-anchor: middle; }
.tray { justify-self: end; display: flex; align-items: center; gap: 21px; }
.status { gap: 10px; }
.clock { text-align: right; }
```
